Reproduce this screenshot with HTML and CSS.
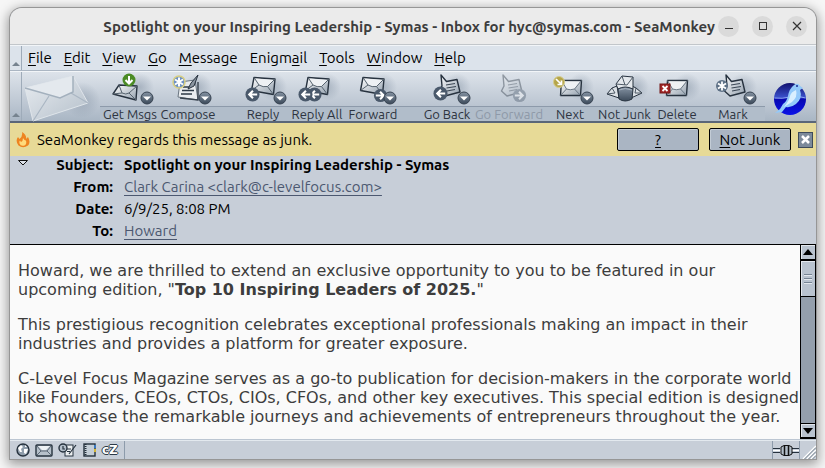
FILE: index.html
```html
<!DOCTYPE html>
<html lang="en">
<head>
    <meta charset="UTF-8">
    <meta name="viewport" content="width=device-width, initial-scale=1.0">
    <title>Spotlight on your Inspiring Leadership - Symas</title>
    <link rel="stylesheet" href="styles.css">
</head>
<body>
    <!-- Shared icon parts -->
    <svg class="defs" width="0" height="0" aria-hidden="true">
        <defs>
            <linearGradient id="paper" x1="0" y1="0" x2="1" y2="1">
                <stop offset="0" stop-color="#ffffff"/>
                <stop offset="1" stop-color="#93a0ae"/>
            </linearGradient>
            <linearGradient id="steel" x1="0" y1="0" x2="0" y2="1">
                <stop offset="0" stop-color="#8593a3"/>
                <stop offset="1" stop-color="#3c4a5a"/>
            </linearGradient>
            <radialGradient id="shade">
                <stop offset="0" stop-color="#7d8c9e" stop-opacity=".45"/>
                <stop offset="1" stop-color="#7d8c9e" stop-opacity="0"/>
            </radialGradient>
            <linearGradient id="globe" x1="0" y1="0" x2="0" y2="1">
                <stop offset="0" stop-color="#10106e"/>
                <stop offset=".45" stop-color="#3a50cc"/>
                <stop offset=".5" stop-color="#0808b0"/>
                <stop offset="1" stop-color="#0a12e8"/>
            </linearGradient>
            <linearGradient id="big-paper" x1="0" y1="0" x2="1" y2="1">
                <stop offset="0" stop-color="#e9edf1"/>
                <stop offset="1" stop-color="#b4bfca"/>
            </linearGradient>
        </defs>
        <symbol id="envelope" viewBox="0 0 26 20">
            <path d="M4 1.500 L25 3 L23.500 18.500 L1.500 14.500 Z" fill="url(#paper)" stroke="#27323f" stroke-width="1.400" stroke-linejoin="round"/>
            <path d="M5 2.500 L9 9 Q13 11.500 17.500 10.500 L24 4 Z" fill="#eef1f4"/>
            <path d="M4 1.500 L9 9 Q13 11.500 17.500 10.500 L25 3 M9 9 L1.500 14.500 M17.500 10.500 L23.500 18.500" fill="none" stroke="#56636f" stroke-width="1"/>
        </symbol>
        <symbol id="envelope-flat" viewBox="0 0 24 18">
            <path d="M2.500 1.500 H22.500 L21.500 16.500 H1.500 Z" fill="url(#paper)" stroke="#27323f" stroke-width="1.400" stroke-linejoin="round"/>
            <path d="M3.500 2.500 L7.500 10 Q11 11.500 15.500 10 L21 2.500 Z" fill="#eef1f4"/>
            <path d="M2.500 1.500 L7.500 10 Q11 11.500 15.500 10 L22.500 1.500 M7.500 10 L1.500 16.500 M15.500 10 L21.500 16.500" fill="none" stroke="#6b7885"/>
        </symbol>
        <symbol id="page" viewBox="0 0 24 24">
            <path d="M4 1 L9.500 7.500 L20 5.500 L23 18 L8 22 L2.500 17 L5 12 Z" fill="url(#paper)" stroke="#27323f" stroke-width="1.400" stroke-linejoin="round"/>
            <path d="M9 11 L18 9.500 M9.500 14 L19 12.500 M10 17 L18 15.500" stroke="#3c4856" stroke-width="1.200"/>
        </symbol>
        <symbol id="drop" viewBox="0 0 14 14">
            <circle cx="7" cy="7" r="6" fill="url(#steel)" stroke="#364250"/>
            <path d="M3 5.500 H11 L7 9.500 Z" fill="#fff"/>
        </symbol>
        <symbol id="arrow-left" viewBox="0 0 16 16">
            <circle cx="8" cy="8" r="7.500" fill="#4a596b"/>
            <path d="M13 8 H5 M8.500 4 L4.500 8 L8.500 12" fill="none" stroke="#fff" stroke-width="2.200"/>
        </symbol>
        <symbol id="arrow-right" viewBox="0 0 16 16">
            <circle cx="8" cy="8" r="7" fill="#4a596b"/>
            <path d="M3 8 H11 M7.500 4 L11.500 8 L7.500 12" fill="none" stroke="#fff" stroke-width="2.200"/>
        </symbol>
    </svg>

    <div class="window">
        <!-- Title bar -->
        <header class="title-bar">
            <h1 class="title">Spotlight on your Inspiring Leadership - Symas - Inbox for hyc@symas.com - SeaMonkey</h1>
            <div class="window-controls">
                <button class="control" aria-label="Minimize"><svg width="12" height="12"><path d="M2 8.500 H10" stroke="#333"/></svg></button>
                <button class="control" aria-label="Maximize"><svg width="12" height="12"><rect x="2.500" y="2.500" width="7" height="7" fill="none" stroke="#333"/></svg></button>
                <button class="control" aria-label="Close"><svg width="12" height="12"><path d="M2 2 L10 10 M10 2 L2 10" stroke="#333" stroke-width="1.200"/></svg></button>
            </div>
        </header>

        <!-- Menu bar -->
        <div class="menu-bar">
            <button class="grippy" aria-label="Collapse menu bar"></button>
            <nav class="menu">
                <a href="#"><u>F</u>ile</a>
                <a href="#"><u>E</u>dit</a>
                <a href="#"><u>V</u>iew</a>
                <a href="#"><u>G</u>o</a>
                <a href="#"><u>M</u>essage</a>
                <a href="#">Enigm<u>a</u>il</a>
                <a href="#"><u>T</u>ools</a>
                <a href="#"><u>W</u>indow</a>
                <a href="#"><u>H</u>elp</a>
            </nav>
        </div>

        <!-- Toolbar -->
        <div class="toolbar">
            <button class="grippy" aria-label="Collapse toolbar"></button>
            <svg class="mail-art" width="78" height="50" viewBox="0 0 78 50" aria-hidden="true">
                <ellipse cx="60" cy="28" rx="18" ry="18" fill="url(#shade)"/>
                <path d="M3 16 L51 4 L66 31 L11 49 Z" fill="url(#big-paper)" stroke="#dfe5ea"/>
                <path d="M11 49 L27 24 M66 31 L49 21" stroke="#aab6c3" stroke-width="1.200"/>
                <path d="M3 16 L51 4 L51 20 L38 26 Z" fill="#e4e9ee"/>
                <path d="M3 16 L38 26 L51 20 V4" fill="none" stroke="#a3b0bd" stroke-width="1.500"/>
            </svg>
            <div class="tools">
                <button class="tool">
                    <svg width="50" height="34" viewBox="0 0 50 34">
                        <ellipse cx="35" cy="15" rx="14" ry="14" fill="url(#shade)"/>
                        <path d="M14 13 L32 14 L31 28 L8 22 Z" fill="url(#paper)" stroke="#27323f" stroke-width="1.400" stroke-linejoin="round"/>
                        <path d="M14 13 L17 21 Q21 23 24 21 L32 14 M17 21 L8 22 M24 21 L31 28" fill="none" stroke="#56636f"/>
                        <circle cx="24" cy="8" r="6.500" fill="#4b8b25"/>
                        <path d="M24 4 V11 M20.500 8 L24 11.500 L27.500 8" fill="none" stroke="#fff" stroke-width="2"/>
                        <use href="#drop" x="35" y="19" width="14" height="14"/>
                    </svg>
                    <span class="tool-label">Get Msgs</span>
                </button>
                <button class="tool">
                    <svg width="50" height="34" viewBox="0 0 50 34">
                        <ellipse cx="35" cy="15" rx="14" ry="14" fill="url(#shade)"/>
                        <path d="M17 10 L32 8 L35 28 L15 25 Z" fill="#e9ecef" stroke="#6a7580"/>
                        <path d="M35 10 L35 28 L17 26" fill="none" stroke="#39434e" stroke-width="1.400"/>
                        <path d="M20 15 H27 M19 18.500 H31 M18 22 H29" stroke="#2d3946" stroke-width="1.600"/>
                        <path d="M35 3 L31 14 L25 17 L28 11 Z" fill="#8a949f" stroke="#27323f"/>
                        <circle cx="16" cy="10" r="6" fill="#6f92c4" stroke="#d8cf83" stroke-width="1.500"/>
                        <path d="M16 5.500 V14.500 M12 7.500 L20 12.500 M20 7.500 L12 12.500" stroke="#fff" stroke-width="2"/>
                        <use href="#drop" x="35" y="19" width="14" height="14"/>
                    </svg>
                    <span class="tool-label">Compose</span>
                </button>
                <span class="gap"></span>
                <button class="tool">
                    <svg width="50" height="34" viewBox="0 0 50 34">
                        <ellipse cx="35" cy="15" rx="14" ry="14" fill="url(#shade)"/>
                        <use href="#envelope" x="12" y="4" width="26" height="20"/>
                        <use href="#arrow-left" x="7" y="15" width="15" height="15"/>
                        <use href="#drop" x="35" y="19" width="14" height="14"/>
                    </svg>
                    <span class="tool-label">Reply</span>
                </button>
                <button class="tool">
                    <svg width="50" height="34" viewBox="0 0 50 34">
                        <ellipse cx="35" cy="15" rx="14" ry="14" fill="url(#shade)"/>
                        <use href="#envelope" x="12" y="4" width="26" height="20"/>
                        <use href="#arrow-left" x="15" y="15" width="15" height="15"/>
                        <use href="#arrow-left" x="6" y="15" width="15" height="15"/>
                    </svg>
                    <span class="tool-label">Reply All</span>
                </button>
                <button class="tool">
                    <svg width="50" height="34" viewBox="0 0 50 34">
                        <ellipse cx="35" cy="15" rx="14" ry="14" fill="url(#shade)"/>
                        <use href="#envelope" x="11" y="4" width="26" height="20"/>
                        <use href="#arrow-right" x="25" y="16" width="15" height="15"/>
                        <use href="#drop" x="35" y="19" width="14" height="14"/>
                    </svg>
                    <span class="tool-label">Forward</span>
                </button>
                <span class="gap"></span>
                <button class="tool">
                    <svg width="50" height="34" viewBox="0 0 50 34">
                        <ellipse cx="35" cy="15" rx="14" ry="14" fill="url(#shade)"/>
                        <use href="#page" x="15" y="2" width="24" height="24"/>
                        <use href="#arrow-left" x="11" y="14" width="15" height="15"/>
                        <use href="#drop" x="35" y="19" width="14" height="14"/>
                    </svg>
                    <span class="tool-label">Go Back</span>
                </button>
                <button class="tool" disabled>
                    <svg width="50" height="34" viewBox="0 0 50 34">
                        <use href="#page" x="15" y="2" width="24" height="24"/>
                        <use href="#arrow-right" x="28" y="16" width="15" height="15"/>
                    </svg>
                    <span class="tool-label">Go Forward</span>
                </button>
                <button class="tool">
                    <svg width="50" height="34" viewBox="0 0 50 34">
                        <ellipse cx="36" cy="15" rx="13" ry="14" fill="url(#shade)"/>
                        <use href="#envelope-flat" x="14" y="7" width="24" height="18"/>
                        <circle cx="14" cy="10" r="5.500" fill="#b5a549" stroke="#d5cc8c"/>
                        <path d="M11 7 L16 12 M16.500 8.500 V12.500 H12.500" fill="none" stroke="#fff" stroke-width="1.700"/>
                        <use href="#drop" x="35" y="19" width="14" height="14"/>
                    </svg>
                    <span class="tool-label">Next</span>
                </button>
                <button class="tool">
                    <svg width="50" height="34" viewBox="0 0 50 34">
                        <ellipse cx="36" cy="15" rx="13" ry="14" fill="url(#shade)"/>
                        <path d="M17 14 L12 16 L7 22 L19 26 Z M32 14 L36 16 L42 21 L31 26 Z" fill="#dce1e6" stroke="#27323f"/>
                        <path d="M12 16 L15 21 L7 22 M36 16 L35 21 L42 21" fill="none" stroke="#4d5965"/>
                        <path d="M16 12 L22 4 L33 5 L33 17 H18 Z" fill="#e4e8ec" stroke="#27323f"/>
                        <path d="M16 12 L27 13 L33 5 M22 4 L25 13" fill="none" stroke="#4d5965"/>
                        <path d="M18 17 Q25 13 33 17 L32 27 Q25 31 19 27 Z" fill="url(#steel)" stroke="#27323f"/>
                        <path d="M19 18 Q25 15 32 18" fill="none" stroke="#a8b3bf"/>
                    </svg>
                    <span class="tool-label">Not Junk</span>
                </button>
                <button class="tool">
                    <svg width="50" height="34" viewBox="0 0 50 34">
                        <ellipse cx="35" cy="15" rx="14" ry="14" fill="url(#shade)"/>
                        <use href="#envelope-flat" x="13" y="7" width="24" height="18"/>
                        <rect x="8" y="12" width="10" height="9" fill="#a12626" stroke="#741616"/>
                        <path d="M10.500 14 L15.500 19 M15.500 14 L10.500 19" stroke="#fff" stroke-width="1.800"/>
                    </svg>
                    <span class="tool-label">Delete</span>
                </button>
                <button class="tool">
                    <svg width="50" height="34" viewBox="0 0 50 34">
                        <ellipse cx="35" cy="15" rx="14" ry="14" fill="url(#shade)"/>
                        <use href="#page" x="14" y="2" width="24" height="24"/>
                        <circle cx="14" cy="14" r="6" fill="#5e7186"/>
                        <path d="M14 9.500 V18.500 M10 11.500 L18 16.500 M18 11.500 L10 16.500" stroke="#fff" stroke-width="1.800"/>
                        <use href="#drop" x="35" y="19" width="14" height="14"/>
                    </svg>
                    <span class="tool-label">Mark</span>
                </button>
            </div>
            <svg class="logo" width="34" height="34" viewBox="0 0 34 34" role="img" aria-label="SeaMonkey">
                <circle cx="17" cy="17" r="16" fill="url(#globe)"/>
                <path d="M1.500 16 Q9 17 17 15 T32.500 16" fill="none" stroke="#8ea6f0"/>
                <path d="M21 3 Q25 0 27 4 L30 6 L27 8 Q30 16 23 22 Q18 26 13 25 L9 30 L2 31 L7 27 L10 22 Q14 19 15 14 Q16 7 21 3 Z" fill="#93c9fa"/>
                <path d="M23 8 Q25 15 19 20 L11 25 Q16 19 17 14 Q18 10 23 8 Z" fill="#d9efff"/>
                <circle cx="24" cy="4" r="1" fill="#1a2a90"/>
            </svg>
        </div>

        <!-- Junk notification -->
        <div class="junk-bar">
            <svg width="14" height="16" viewBox="0 0 14 16" aria-hidden="true">
                <path d="M6 0 Q11 3 10 7 L12 5 Q15 10 12 13.500 Q7 17 2.500 13.500 Q-1 9 2 5 L3.500 7 Q7 4 6 0 Z" fill="#ee8420"/>
                <path d="M7 6 Q9 9 10 8.500 Q11 12 8.500 13.500 Q4.500 14.500 3.500 11.500 Q3 9 4 8.500 L5 10 Q7 9 7 6 Z" fill="#ffdb7c"/>
            </svg>
            <p class="junk-text">SeaMonkey regards this message as junk.</p>
            <button class="junk-btn"><u>?</u></button>
            <button class="junk-btn"><u>N</u>ot Junk</button>
            <button class="junk-close" aria-label="Close"><svg width="13" height="13"><path d="M3 3 L10 10 M10 3 L3 10" stroke="#fff" stroke-width="2.500"/></svg></button>
        </div>

        <!-- Message headers -->
        <div class="headers">
            <button class="twisty" aria-label="Toggle headers"><svg width="12" height="8"><path d="M1.500 1.500 H10.500 L6 6 Z" fill="#dce2e9" stroke="#111"/></svg></button>
            <dl class="fields">
                <dt>Subject:</dt>
                <dd class="subject">Spotlight on your Inspiring Leadership - Symas</dd>
                <dt>From:</dt>
                <dd><a href="#">Clark Carina &lt;clark@c-levelfocus.com&gt;</a></dd>
                <dt>Date:</dt>
                <dd>6/9/25, 8:08 PM</dd>
                <dt>To:</dt>
                <dd><a href="#">Howard</a></dd>
            </dl>
        </div>

        <!-- Message body -->
        <main class="message">
            <article class="message-text">
                <p>Howard, we are thrilled to extend an exclusive opportunity to you to be featured in our<br>upcoming edition, "<b>Top 10 Inspiring Leaders of 2025.</b>"</p>
                <p>This prestigious recognition celebrates exceptional professionals making an impact in their industries and provides a platform for greater exposure.</p>
                <p>C-Level Focus Magazine serves as a go-to publication for decision-makers in the corporate world like Founders, CEOs, CTOs, CIOs, CFOs, and other key executives. This special edition is designed to showcase the remarkable journeys and achievements of entrepreneurs throughout the year.</p>
            </article>
            <div class="scrollbar">
                <button class="scroll-btn" aria-label="Scroll up"><svg width="10" height="6"><path d="M0 6 L5 0 L10 6 Z"/></svg></button>
                <div class="thumb"><svg width="8" height="12"><path d="M0 1.500 H8 M0 5.500 H8 M0 9.500 H8" stroke="#768494"/><path d="M0 2.500 H8 M0 6.500 H8 M0 10.500 H8" stroke="#e3e8ee"/></svg></div>
                <button class="scroll-btn scroll-down" aria-label="Scroll down"><svg width="10" height="6"><path d="M0 0 L5 6 L10 0 Z"/></svg></button>
            </div>
        </main>

        <!-- Status bar -->
        <footer class="status-bar">
            <div class="components">
                <button aria-label="Browser"><svg width="14" height="14"><circle cx="7" cy="7" r="6" fill="#8f9dab" stroke="#26323e" stroke-width="1.400"/><path d="M2 5 L5 2 L7 4 L5 6 L6 9 L4 9 Z M8 6 L12 6 L10 11 L8 10 Z M9 2 L11 4 L9 4 Z" fill="#fff"/></svg></button>
                <button aria-label="Mail"><svg width="18" height="14"><rect x="1" y="2" width="16" height="11" rx="1" fill="#b6c0ca" stroke="#26323e" stroke-width="1.400"/><path d="M3 3 L7 7 H11 L15 3 Z" fill="#eef2f5"/><path d="M2 3 L6 8 H12 L16 3 M6 8 L2 12 M12 8 L16 12" fill="none" stroke="#5c6976"/></svg></button>
                <button aria-label="Composer"><svg width="19" height="14"><rect x="7" y="2" width="8" height="11" fill="#edf0f2" stroke="#26323e"/><circle cx="5" cy="5" r="4" fill="#b4bfca" stroke="#26323e" stroke-width="1.400"/><path d="M9 6 H13 M9 8.500 H12 M5 3 V6 H7 M18 2 L11 11" fill="none" stroke="#26323e" stroke-width="1.200"/></svg></button>
                <button aria-label="Address Book"><svg width="15" height="14"><rect x="2" y="1" width="11" height="12" fill="#c4ced7" stroke="#26323e" stroke-width="1.400"/><path d="M3.500 1 V13" stroke="#26323e" stroke-width="2" stroke-dasharray="1 1"/><path d="M13 2 V5" stroke="#3a7ac0" stroke-width="2"/><path d="M13 6 V9" stroke="#d5b736" stroke-width="2"/></svg></button>
                <button class="chatzilla" aria-label="ChatZilla">cZ</button>
            </div>
            <div class="online">
                <svg width="26" height="12" aria-hidden="true"><path d="M0 4.500 H7 M19 4.500 H26 M0 8.500 H7 M19 8.500 H26" stroke="#26323e"/><path d="M0 6.500 H26" stroke="#fff"/><path d="M8 3 L11 1.500 H16 L19 3 V10 L16 11.500 H11 L8 10 Z" fill="#b4bfca" stroke="#111"/><path d="M11.500 2 V11 M15.500 2 V11" stroke="#111" stroke-width="1.500"/></svg>
            </div>
            <svg class="resizer" width="14" height="16" aria-hidden="true"><path d="M1 16 L14 3 M5 16 L14 7 M9 16 L14 11" stroke="#fff" stroke-width="1.500"/><path d="M2 16.500 L14 4.500 M6 16.500 L14 8.500 M10 16.500 L14 12.500" stroke="#76838f"/></svg>
        </footer>
    </div>
</body>
</html>
```

FILE: styles.css
```css
* {
    box-sizing: border-box;
}

body {
    margin: 0;
    height: 100vh;
    padding: 8px 9px 9px 10px;
    background: #f6f6f6;
    font-family: "Ubuntu", "Noto Sans", sans-serif;
    font-size: 15px;
    color: #000;
}

button {
    padding: 0;
    border: 0;
    background: none;
    font: inherit;
    color: inherit;
}

.defs {
    position: absolute;
}

.window {
    height: 100%;
    display: flex;
    flex-direction: column;
    border-radius: 12px 12px 0 0;
    background: #c7ced8;
    box-shadow: 0 0 0 1px #969696, 0 3px 12px 2px rgba(0, 0, 0, 0.4);
    overflow: hidden;
}

/* title bar */
.title-bar {
    height: 37px;
    flex: none;
    display: flex;
    align-items: center;
    justify-content: flex-end;
    gap: 3px;
    padding-right: 9px;
    background: #ebebeb;
    border-bottom: 1px solid #c2c6ca;
}

.title {
    margin: 0;
    font-size: 15px;
    font-weight: 700;
    color: #3d3d3d;
    white-space: nowrap;
}

.window-controls {
    display: flex;
    gap: 13px;
}

.control {
    width: 21px;
    height: 21px;
    display: flex;
    align-items: center;
    justify-content: center;
    border-radius: 50%;
    background: #dadada;
}

/* menu bar and toolbar */
.menu-bar,
.toolbar {
    flex: none;
    display: flex;
    border-top: 1px solid #f2f5f8;
}

.menu-bar {
    height: 26px;
    background: #dce3eb;
    border-bottom: 1px solid #abb6c3;
}

.grippy {
    width: 12px;
    flex: none;
    display: flex;
    align-items: flex-end;
    justify-content: center;
    padding-bottom: 4px;
    border-right: 1px solid #9eabb9;
}

.grippy::after {
    content: "";
    border: 4px solid transparent;
    border-top: 0;
    border-bottom-color: #76838f;
}

.menu {
    display: flex;
    align-items: center;
    gap: 12px;
    padding: 0 6px 2px;
}

.menu a {
    color: #000;
    text-decoration: none;
}

u {
    text-underline-offset: 2px;
}

.toolbar {
    height: 52px;
    background: linear-gradient(#dde3ea, #bcc6d2 66%, #a9b6c4);
    border-bottom: 2px solid #5a6678;
}

.mail-art {
    flex: none;
}

.tools {
    flex: none;
    display: grid;
    grid-template-columns: 60px 56px 22px 50px 58px 54px 20px 54px 70px 52px 57px 48px 64px;
}

.tool {
    display: flex;
    flex-direction: column;
    align-items: center;
}

.tool svg {
    flex: none;
}

.tool-label,
.gap {
    align-self: stretch;
    border-top: 1px solid #8d9aaa;
    background: #b1bdca;
}

.gap {
    margin-top: 34px;
}

.tool-label {
    flex: 1;
    font-size: 13px;
    line-height: 14px;
    text-align: center;
    white-space: nowrap;
    color: #2d3440;
}

.tool:disabled svg {
    opacity: 0.4;
}

.tool:disabled .tool-label {
    color: #8e99a8;
}

.logo {
    flex: none;
    align-self: center;
    margin: 4px 9px 0 auto;
}

/* junk notification */
.junk-bar {
    height: 33px;
    flex: none;
    display: flex;
    align-items: center;
    padding: 0 3px 0 6px;
    background: #e7da97;
}

.junk-text {
    flex: 1;
    margin: 0 0 0 7px;
}

.junk-btn {
    width: 82px;
    height: 23px;
    margin-right: 10px;
    border: 1px solid #000;
    border-radius: 2px;
    background: #aab5c3;
    box-shadow: inset 1px 1px #c3ccd6;
    line-height: 20px;
}

.junk-close {
    width: 15px;
    height: 16px;
    margin-left: -3px;
    display: flex;
    align-items: center;
    justify-content: center;
    border: 1px solid #3e4b5b;
    background: #7c8a9a;
}

/* message headers */
.headers {
    flex: none;
    display: flex;
    align-items: flex-start;
    height: 89px;
    border-bottom: 1px solid #000;
}

.twisty {
    margin: 3px 0 0 7px;
    line-height: 0;
}

.fields {
    margin: 0;
    display: grid;
    grid-template-columns: 84px 1fr;
    column-gap: 11px;
    line-height: 22px;
    margin-top: -2px;
}

.fields dt {
    font-weight: 700;
    text-align: right;
}

.fields dd {
    margin: 0;
}

.subject {
    font-weight: 700;
}

.fields a {
    color: #4c5870;
    text-underline-offset: 3px;
}

/* message body */
.message {
    flex: 1;
    min-height: 0;
    display: flex;
    background: #fafafa;
    border-bottom: 1px solid #bcc6d2;
}

.message-text {
    flex: 1;
    padding: 16px 0 0 8px;
    overflow: hidden;
    font-family: "DejaVu Sans", sans-serif;
    font-size: 16px;
    line-height: 19px;
    color: #3d3d3d;
}

.message-text p {
    margin: 0 0 16px;
}

.scrollbar {
    width: 16px;
    flex: none;
    display: flex;
    flex-direction: column;
    background: #949fac;
    border: 1px solid #000;
    border-top: 0;
}

.scroll-btn,
.thumb {
    flex: none;
    display: flex;
    align-items: center;
    justify-content: center;
    background: #b9c3cf;
    border-bottom: 1px solid #000;
    box-shadow: inset 1px 1px #e3e8ee;
}

.scroll-btn {
    height: 15px;
}

.thumb {
    height: 37px;
    border-top: 1px solid #000;
}

.scroll-down {
    margin-top: auto;
    border-top: 1px solid #000;
}

/* status bar */
.status-bar {
    height: 19px;
    flex: none;
    display: flex;
    align-items: stretch;
    border-top: 1px solid #e3e9ef;
}

.components {
    display: flex;
    align-items: center;
    gap: 5px;
    padding: 0 6px;
    border-right: 1px solid #8d9bab;
}

.components button {
    line-height: 0;
}

.components .chatzilla {
    font-family: "DejaVu Sans", sans-serif;
    font-size: 12px;
    font-weight: 700;
    line-height: 16px;
    color: #fff;
    text-shadow: 1px 0 #2c3946, -1px 0 #2c3946, 0 1px #2c3946, 0 -1px #2c3946;
}

.online {
    margin-left: auto;
    display: flex;
    align-items: center;
    border-left: 1px solid #8d9bab;
    border-right: 1px solid #8d9bab;
}

.resizer {
    margin: 2px 0 0 2px;
}
```
